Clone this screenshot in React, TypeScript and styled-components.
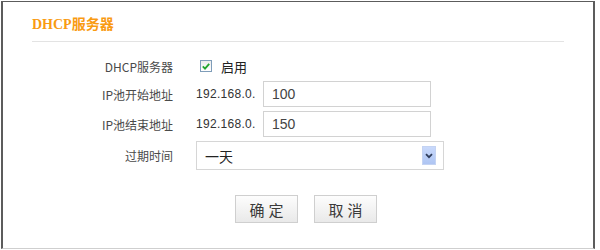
import React from 'react';
import styled, { createGlobalStyle } from 'styled-components';

const GlobalStyle = createGlobalStyle`
  html, body {
    margin: 0;
    padding: 0;
    background: #ffffff;
  }
  body {
    font-family: "Liberation Sans", "Noto Sans CJK SC", sans-serif;
    font-size: 12px;
    color: #333333;
  }
`;

const Panel = styled.div`
  box-sizing: border-box;
  margin: 1px 0 0 1px;
  width: 594px;
  height: 248px;
  border-top: 1px solid #5c5c5c;
  border-left: 2px solid #5c5c5c;
  border-right: 2px solid #5c5c5c;
  border-bottom: 1px solid #cfcfcf;
  padding: 0 29px 0 29px;
`;

const Header = styled.div`
  height: 40px;
  box-sizing: border-box;
  padding-top: 14px;
  border-bottom: 1px solid #e3e3e3;
`;

const Title = styled.h2`
  margin: 0;
  font-family: "Liberation Serif", "Noto Sans CJK SC", serif;
  font-size: 14px;
  line-height: 18px;
  font-weight: bold;
  color: #f99b12;
`;

const Form = styled.div`
  display: flex;
  flex-direction: column;
  gap: 4px;
  padding-top: 13px;
`;

const Row = styled.div<{ $height: number }>`
  display: grid;
  grid-template-columns: 141px 1fr;
  column-gap: 23px;
  align-items: center;
  height: ${(p) => p.$height}px;
`;

const Label = styled.span`
  text-align: right;
  font-family: "Noto Sans CJK SC", sans-serif;
  font-size: 12px;
  color: #4a4a4a;
`;

const Field = styled.div`
  display: flex;
  align-items: center;
`;

const CheckBox = styled.span`
  box-sizing: border-box;
  display: inline-flex;
  align-items: center;
  justify-content: center;
  width: 12px;
  height: 12px;
  margin-left: 4px;
  border: 1px solid #7f9db9;
  background: linear-gradient(#ececec, #ffffff);
`;

const CheckText = styled.span`
  margin-left: 9px;
  font-family: "Noto Sans CJK SC", sans-serif;
  font-size: 13px;
  color: #222222;
`;

const Prefix = styled.span`
  width: 67px;
  font-size: 12px;
  letter-spacing: 0.3px;
  color: #333333;
`;

const TextInput = styled.input`
  box-sizing: border-box;
  width: 168px;
  height: 26px;
  padding: 0 8px;
  border: 1px solid #d2d2d2;
  font-family: "Liberation Sans", sans-serif;
  font-size: 14px;
  color: #444444;
  outline: none;
`;

const SelectBox = styled.div`
  box-sizing: border-box;
  display: flex;
  align-items: center;
  justify-content: space-between;
  width: 248px;
  height: 29px;
  padding: 0 7px 0 8px;
  border: 1px solid #d6d6d6;
  font-family: "Noto Sans CJK SC", sans-serif;
  font-size: 14px;
  color: #222222;
`;

const ArrowButton = styled.span`
  display: inline-flex;
  align-items: center;
  justify-content: center;
  width: 14px;
  height: 19px;
  background: linear-gradient(#c9d9fb, #aec5f3);
  border: 1px solid #c4d3f2;
  box-sizing: border-box;
`;

const Buttons = styled.div`
  display: flex;
  gap: 16px;
  padding: 25px 0 0 203px;
`;

const Button = styled.button`
  box-sizing: border-box;
  width: 63px;
  height: 28px;
  border: 1px solid #cfcfcf;
  border-radius: 0;
  background: linear-gradient(#fdfdfd, #e9e9e9);
  font-family: "Noto Sans CJK SC", sans-serif;
  font-size: 15px;
  letter-spacing: 4px;
  text-indent: 4px;
  color: #3a3a3a;
  padding: 0;
`;

const App: React.FC = () => {
  return (
    <>
      <GlobalStyle />
      <Panel>
        <Header>
          <Title>DHCP服务器</Title>
        </Header>
        <Form>
          <Row $height={22}>
            <Label>DHCP服务器</Label>
            <Field>
              <CheckBox>
                <svg width="8" height="7" viewBox="0 0 8 7">
                  <path d="M0.8 3.4 L3 5.6 L7.2 0.9" fill="none" stroke="#22a52c" strokeWidth="1.8" />
                </svg>
              </CheckBox>
              <CheckText>启用</CheckText>
            </Field>
          </Row>
          <Row $height={26}>
            <Label>IP池开始地址</Label>
            <Field>
              <Prefix>192.168.0.</Prefix>
              <TextInput defaultValue="100" />
            </Field>
          </Row>
          <Row $height={26}>
            <Label>IP池结束地址</Label>
            <Field>
              <Prefix>192.168.0.</Prefix>
              <TextInput defaultValue="150" />
            </Field>
          </Row>
          <Row $height={29}>
            <Label>过期时间</Label>
            <Field>
              <SelectBox>
                <span>一天</span>
                <ArrowButton>
                  <svg width="8" height="6" viewBox="0 0 8 6">
                    <path d="M1 1.2 L4 4.2 L7 1.2" fill="none" stroke="#2f3d5c" strokeWidth="1.8" />
                  </svg>
                </ArrowButton>
              </SelectBox>
            </Field>
          </Row>
        </Form>
        <Buttons>
          <Button>确定</Button>
          <Button>取消</Button>
        </Buttons>
      </Panel>
    </>
  );
};

export default App;
